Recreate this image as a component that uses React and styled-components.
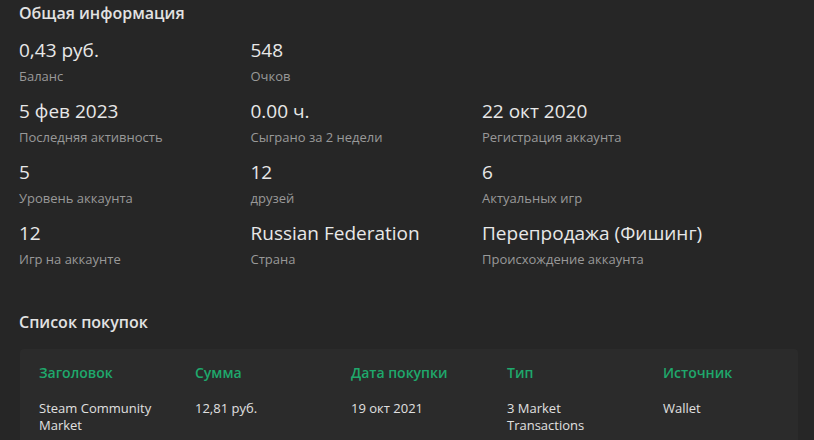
import React from "react";
import styled, { createGlobalStyle } from "styled-components";

const Global = createGlobalStyle`
  html, body { margin: 0; padding: 0; background: #262626; }
  body { font-family: "Open Sans", "Noto Sans", sans-serif; color: #e4e4e4; }
`;

const Page = styled.div`
  padding: 2px 16px 24px 20px;
`;

const SectionTitle = styled.h2`
  margin: 0;
  font-size: 16px;
  line-height: 22px;
  font-weight: 600;
  color: #e2e2e2;
  margin-left: -1px;
`;

const StatsGrid = styled.div`
  display: grid;
  grid-template-columns: repeat(3, 231.5px);
  row-gap: 14px;
  margin-top: 14px;
`;

const Stat = styled.div`
  display: flex;
  flex-direction: column;
  gap: 5px;
  grid-column: ${(p) => p.$col || "auto"};
`;

const Value = styled.div`
  font-size: 19px;
  line-height: 24px;
  color: #e8e8e8;
  margin-left: -1px;
`;

const Label = styled.div`
  font-size: 13px;
  line-height: 18px;
  color: #999999;
  margin-left: -1px;
`;

const PurchasesTitle = styled(SectionTitle)`
  margin-top: 43px;
`;

const Card = styled.div`
  margin-top: 16px;
  background: #2b2b2b;
  border-radius: 4px;
  padding: 14px 19px 20px;
`;

const TableRow = styled.div`
  display: grid;
  grid-template-columns: repeat(4, 156px) 1fr;
  & + & { margin-top: 17px; }
`;

const HeadCell = styled.div`
  font-size: 14px;
  line-height: 20px;
  font-weight: 600;
  color: #1fa86c;
  padding-right: 30px;
`;

const Cell = styled.div`
  font-size: 13px;
  line-height: 17px;
  color: #e0e0e0;
  padding-right: 30px;
`;

const stats = [
  { v: "0,43 руб.", l: "Баланс" },
  { v: "548", l: "Очков" },
  { v: "5 фев 2023", l: "Последняя активность", col: 1 },
  { v: "0.00 ч.", l: "Сыграно за 2 недели" },
  { v: "22 окт 2020", l: "Регистрация аккаунта" },
  { v: "5", l: "Уровень аккаунта" },
  { v: "12", l: "друзей" },
  { v: "6", l: "Актуальных игр" },
  { v: "12", l: "Игр на аккаунте" },
  { v: "Russian Federation", l: "Страна" },
  { v: "Перепродажа (Фишинг)", l: "Происхождение аккаунта" },
];

const headers = ["Заголовок", "Сумма", "Дата покупки", "Тип", "Источник"];
const rows = [
  ["Steam Community Market", "12,81 руб.", "19 окт 2021", "3 Market Transactions", "Wallet"],
];

export default function App() {
  return (
    <>
      <Global />
      <Page>
        <SectionTitle>Общая информация</SectionTitle>
        <StatsGrid>
          {stats.map((s, i) => (
            <Stat key={i} $col={s.col}>
              <Value>{s.v}</Value>
              <Label>{s.l}</Label>
            </Stat>
          ))}
        </StatsGrid>
        <PurchasesTitle>Список покупок</PurchasesTitle>
        <Card>
          <TableRow>
            {headers.map((h) => (
              <HeadCell key={h}>{h}</HeadCell>
            ))}
          </TableRow>
          {rows.map((r, i) => (
            <TableRow key={i}>
              {r.map((c, j) => (
                <Cell key={j}>{c}</Cell>
              ))}
            </TableRow>
          ))}
        </Card>
      </Page>
    </>
  );
}
